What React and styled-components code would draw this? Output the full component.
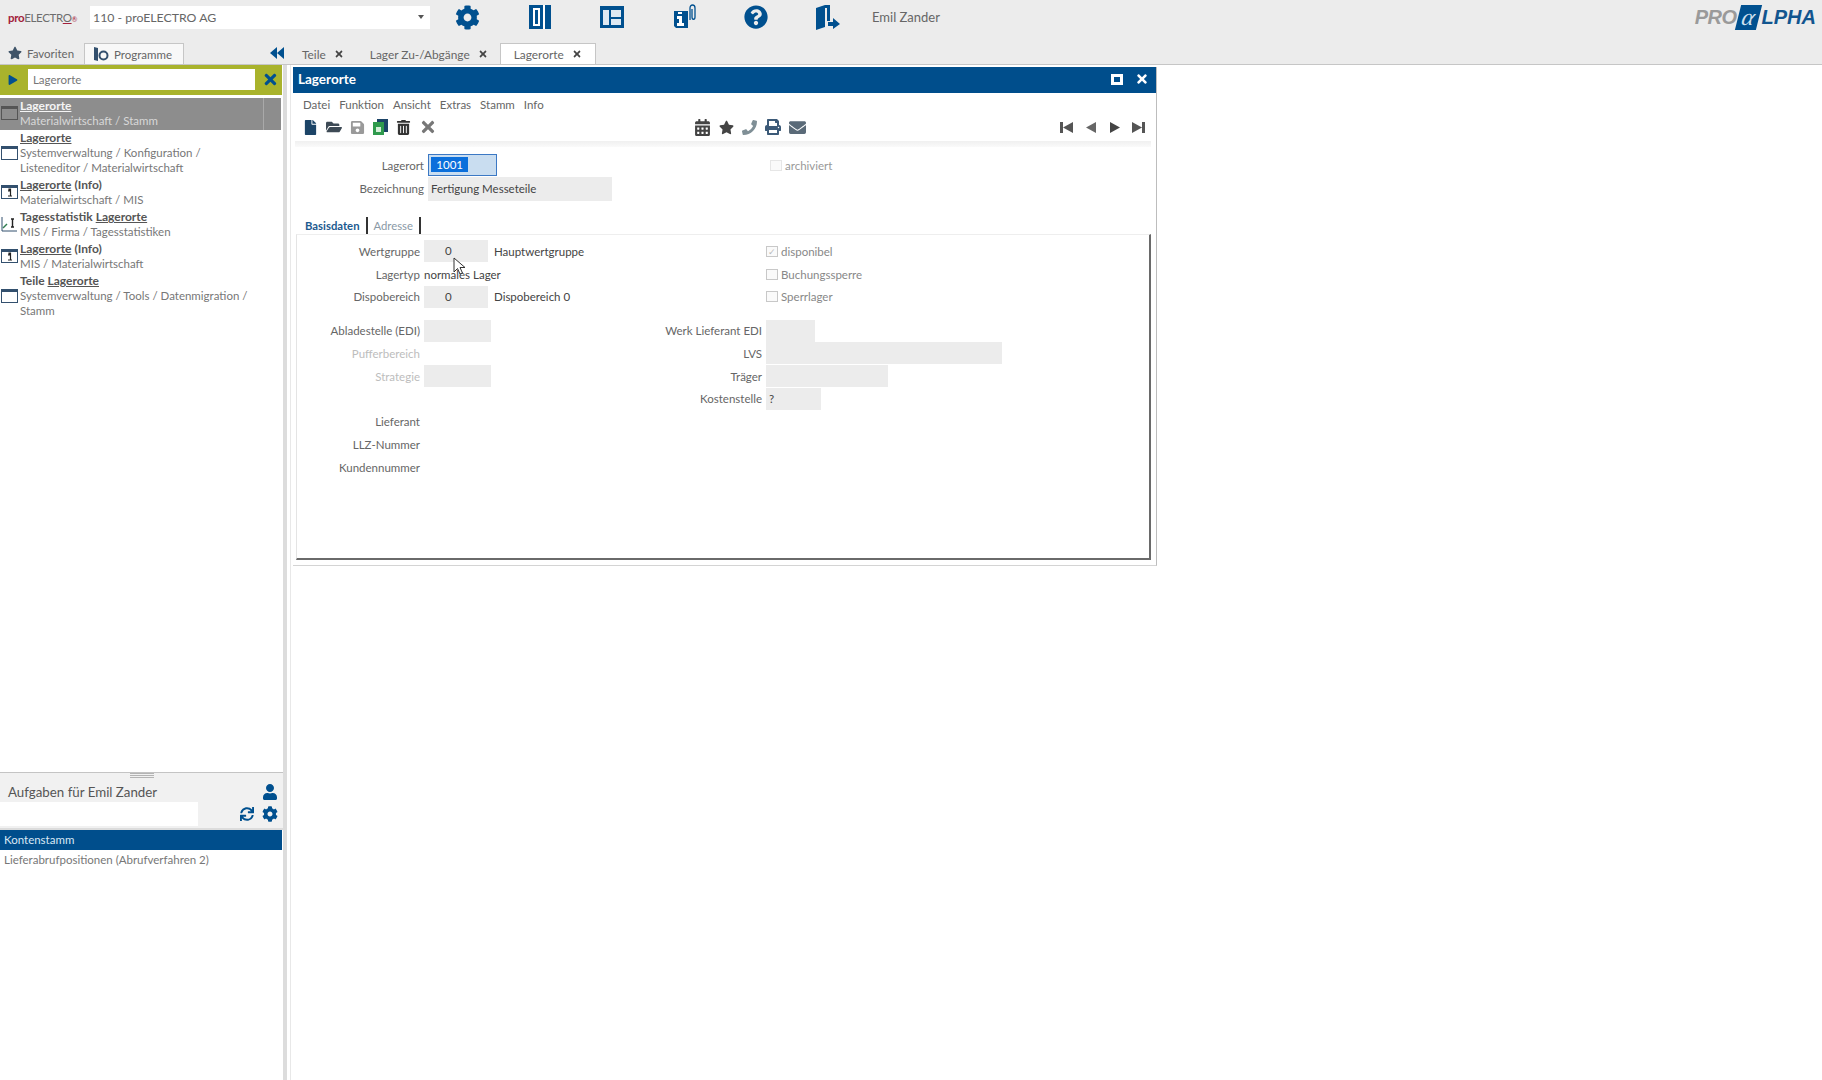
import React from 'react';
import styled, { createGlobalStyle } from 'styled-components';
import {
	FaCog,
	FaStar,
	FaUser,
	FaSync,
	FaTimes,
	FaCalendarAlt,
	FaPhoneAlt,
	FaPrint,
	FaEnvelope,
	FaFile,
	FaFolderOpen,
	FaSave,
	FaTrashAlt,
	FaQuestionCircle,
	FaPlay,
} from 'react-icons/fa';

const results = [
	{ title: ['Lagerorte'], rest: '', path: ['Materialwirtschaft / Stamm'], icon: 'window', selected: true },
	{ title: ['Lagerorte'], rest: '', path: ['Systemverwaltung / Konfiguration /', 'Listeneditor / Materialwirtschaft'], icon: 'window' },
	{ title: ['Lagerorte'], rest: ' (Info)', path: ['Materialwirtschaft / MIS'], icon: 'info' },
	{ before: 'Tagesstatistik ', title: ['Lagerorte'], rest: '', path: ['MIS / Firma / Tagesstatistiken'], icon: 'chart' },
	{ title: ['Lagerorte'], rest: ' (Info)', path: ['MIS / Materialwirtschaft'], icon: 'info' },
	{ before: 'Teile ', title: ['Lagerorte'], rest: '', path: ['Systemverwaltung / Tools / Datenmigration /', 'Stamm'], icon: 'window' },
];

const menus = ['Datei', 'Funktion', 'Ansicht', 'Extras', 'Stamm', 'Info'];

const ListIcon = ({ kind, selected }) => {
	const stroke = selected ? '#555' : '#33506e';
	if (kind === 'chart') {
		return (
			<svg width='17' height='16' viewBox='0 0 17 16'>
				<path d='M1 1v14h15' fill='none' stroke={stroke} strokeWidth='1' />
				<path d='M2 12l4-4' fill='none' stroke='#2f7d4f' strokeWidth='1.4' />
				<path d='M10 3h3M11.5 3v8M10 11h3' fill='none' stroke='#222' strokeWidth='1.4' />
			</svg>
		);
	}
	return (
		<svg width='17' height='16' viewBox='0 0 17 16'>
			<rect x='0.5' y='1.5' width='16' height='13' fill={selected ? '#8d8d8d' : '#fff'} stroke={stroke} />
			<rect x='0.5' y='1.5' width='16' height='2.5' fill={stroke} />
			{kind === 'info' && <path d='M7 7h2.5v5H11M7 12h4M8 5h1.5v1H8z' fill='none' stroke='#222' strokeWidth='1.2' />}
		</svg>
	);
};

const NavIcon = ({ d, color }) => (
	<svg width='15' height='15' viewBox='0 0 15 15'>
		<path d={d} fill={color} />
	</svg>
);

const App = () => {
	return (
		<>
			<GlobalStyle />
			<Page>
				<TopBar>
					<BrandRow>
						<ProElectro>
							<b>pro</b>ELECTR<u>O</u>
							<i>®</i>
						</ProElectro>
						<ClientSelect>
							<span>110 - proELECTRO AG</span>
							<Caret />
						</ClientSelect>
						<TopIcons>
							<FaCog size={25} />
							<svg width='24' height='24' viewBox='0 0 24 24'>
								<rect x='1' y='0' width='22' height='24' fill='#00508f' />
								<rect x='5' y='3' width='7' height='18' fill='#fff' />
								<rect x='7' y='5' width='3' height='14' fill='#00508f' />
								<rect x='15' y='0' width='2' height='24' fill='#fff' />
							</svg>
							<svg width='24' height='24' viewBox='0 0 24 24'>
								<rect x='0' y='1' width='24' height='22' fill='#00508f' />
								<rect x='3' y='5' width='6' height='15' fill='#dfe9f2' />
								<rect x='11' y='5' width='10' height='7' fill='#dfe9f2' />
								<rect x='11' y='14' width='10' height='6' fill='#dfe9f2' />
							</svg>
							<svg width='24' height='26' viewBox='0 0 24 26'>
								<path d='M2 7h14v17H4l-2-2z' fill='#00508f' />
								<path d='M6 8h4v2H6zM5 12h5v7h2v3H5v-3h2v-4H5z' fill='#fff' />
								<path d='M18 16V4c0-4 5-4 5 0v9c0 3-3 3-3 0V5' fill='none' stroke='#00508f' strokeWidth='1.3' />
							</svg>
							<FaQuestionCircle size={24} />
							<svg width='24' height='25' viewBox='0 0 24 25'>
								<path d='M0 3l9-3h5v16h-3V3H9v19l-9 3z' fill='#00508f' />
								<path d='M12 17h5v-4l7 6-7 5v-3h-5z' fill='#00508f' />
							</svg>
						</TopIcons>
						<UserName>Emil Zander</UserName>
						<ProAlpha>
							<span>PRO</span>
							<AlphaBlock>
								<em>α</em>
							</AlphaBlock>
							<strong>LPHA</strong>
						</ProAlpha>
					</BrandRow>
					<NavRow>
						<NavLeft>
							<FavTab>
								<FaStar size={14} />
								Favoriten
							</FavTab>
							<ProgTab>
								<svg width='16' height='16' viewBox='0 0 16 16'>
									<path d='M1 1l4 1v13l-4-1z' fill='#33506e' />
									<circle cx='10.5' cy='9.5' r='4' fill='none' stroke='#33506e' strokeWidth='2' />
								</svg>
								Programme
							</ProgTab>
							<Collapse>
								<svg width='14' height='12' viewBox='0 0 14 12'>
									<path d='M7 0v12L0 6zM14 0v12L7 6z' fill='#00508f' />
								</svg>
							</Collapse>
						</NavLeft>
						<OpenTab $left={4}>
							Teile
							<FaTimes size={10} />
						</OpenTab>
						<OpenTab $left={-2}>
							Lager Zu-/Abgänge
							<FaTimes size={10} />
						</OpenTab>
						<OpenTab $active $left={-2}>
							Lagerorte
							<FaTimes size={10} />
						</OpenTab>
					</NavRow>
				</TopBar>
				<Body>
					<Sidebar>
						<SearchBar>
							<FaPlay size={10} />
							<SearchInput>Lagerorte</SearchInput>
							<FaTimes size={17} />
						</SearchBar>
						<ResultList>
							{results.map((r, i) => (
								<ResultRow key={i} $selected={r.selected}>
									<ListIcon kind={r.icon} selected={r.selected} />
									<ResultText>
										<ResultTitle $selected={r.selected}>
											{r.before}
											<u>{r.title[0]}</u>
											{r.rest}
										</ResultTitle>
										{r.path.map((p) => (
											<ResultPath key={p} $selected={r.selected}>
												{p}
											</ResultPath>
										))}
									</ResultText>
								</ResultRow>
							))}
						</ResultList>
						<TaskPanel>
							<Grip />
							<TaskHead>
								<TaskTitle>Aufgaben für Emil Zander</TaskTitle>
								<FaUser size={16} />
							</TaskHead>
							<TaskTools>
								<TaskFilter />
								<FaSync size={14} />
								<FaCog size={16} />
							</TaskTools>
						</TaskPanel>
						<TaskList>
							<TaskRow $active>Kontenstamm</TaskRow>
							<TaskRow>Lieferabrufpositionen (Abrufverfahren 2)</TaskRow>
						</TaskList>
					</Sidebar>
					<Splitter />
					<Main>
						<Window>
							<TitleBar>
								Lagerorte
								<WindowButtons>
									<Maximize />
									<FaTimes size={14} />
								</WindowButtons>
							</TitleBar>
							<MenuBar>
								{menus.map((m) => (
									<span key={m}>{m}</span>
								))}
							</MenuBar>
							<Toolbar>
								<ToolGroup>
									<FaFile size={15} color='#1c4467' />
									<FaFolderOpen size={16} color='#3d4a55' />
									<FaSave size={15} color='#9a9a9a' />
									<svg width='15' height='16' viewBox='0 0 15 16'>
										<rect x='4' y='0' width='11' height='13' fill='#1c4467' />
										<rect x='0' y='3' width='11' height='13' fill='#2f9a4d' />
										<rect x='3' y='8' width='5' height='5' fill='#d5efd9' />
									</svg>
									<FaTrashAlt size={15} color='#333' />
									<FaTimes size={18} color='#777' />
								</ToolGroup>
								<ToolGroup $gap={8} $left={257}>
									<FaCalendarAlt size={17} color='#444' />
									<FaStar size={15} color='#444' />
									<FaPhoneAlt size={15} color='#7f8f96' style={{ transform: 'scaleX(-1)' }} />
									<FaPrint size={16} color='#3c5a78' />
									<FaEnvelope size={17} color='#5a6a78' />
								</ToolGroup>
								<ToolGroup $gap={9} $push>
									<NavIcon d='M1 2h3v11H1zM14 2v11L4 7.5z' color='#555' />
									<NavIcon d='M13 2v11L3 7.5z' color='#666' />
									<NavIcon d='M3 2v11l10-5.5z' color='#444' />
									<NavIcon d='M1 2v11l10-5.5zM11 2h3v11h-3z' color='#555' />
								</ToolGroup>
							</Toolbar>
							<ToolShade />
							<HeadForm>
								<HeadRow>
									<HeadCell>
										<Label $width={131}>Lagerort</Label>
										<KeyInput>
											<mark>1001</mark>
										</KeyInput>
									</HeadCell>
									<CheckCell $left={4}>
										<Check $faint />
										<CheckLabel $faint>archiviert</CheckLabel>
									</CheckCell>
								</HeadRow>
								<HeadRow>
									<HeadCell>
										<Label $width={131}>Bezeichnung</Label>
										<Field $width={184} $height={24}>
											Fertigung Messeteile
										</Field>
									</HeadCell>
								</HeadRow>
							</HeadForm>
							<FormTabs>
								<FormTab $active>Basisdaten</FormTab>
								<FormTab>Adresse</FormTab>
							</FormTabs>
							<TabFrame>
								<FieldGrid>
									<Label>Wertgruppe</Label>
									<ValueCell>
										<Field $width={64} $pad={21} $hasCursor>
											0
											<Cursor width='13' height='18' viewBox='0 0 13 18'>
												<path d='M1 1v14l3.5-3.5 2.5 5.5 2.5-1-2.5-5.5h5z' fill='#fff' stroke='#333' />
											</Cursor>
										</Field>
										<Value>Hauptwertgruppe</Value>
									</ValueCell>
									<span />
									<CheckCell>
										<Check $checked />
										<CheckLabel>disponibel</CheckLabel>
									</CheckCell>

									<Label>Lagertyp</Label>
									<ValueCell>
										<Value>normales Lager</Value>
									</ValueCell>
									<span />
									<CheckCell>
										<Check />
										<CheckLabel>Buchungssperre</CheckLabel>
									</CheckCell>

									<Label>Dispobereich</Label>
									<ValueCell>
										<Field $width={64} $pad={21}>
											0
										</Field>
										<Value>Dispobereich 0</Value>
									</ValueCell>
									<span />
									<CheckCell>
										<Check />
										<CheckLabel>Sperrlager</CheckLabel>
									</CheckCell>
								</FieldGrid>
								<FieldGrid $top={11}>
									<Label>Abladestelle (EDI)</Label>
									<ValueCell>
										<Field $width={67} />
									</ValueCell>
									<Label>Werk Lieferant EDI</Label>
									<ValueCell>
										<Field $width={49} />
									</ValueCell>

									<Label $disabled>Pufferbereich</Label>
									<span />
									<Label>LVS</Label>
									<ValueCell>
										<Field $width={236} />
									</ValueCell>

									<Label $disabled>Strategie</Label>
									<ValueCell>
										<Field $width={67} />
									</ValueCell>
									<Label>Träger</Label>
									<ValueCell>
										<Field $width={122} />
									</ValueCell>

									<span />
									<span />
									<Label>Kostenstelle</Label>
									<ValueCell>
										<Field $width={55} $pad={3}>
											?
										</Field>
									</ValueCell>

									<Label>Lieferant</Label>
									<span />
									<span />
									<span />

									<Label>LLZ-Nummer</Label>
									<span />
									<span />
									<span />

									<Label>Kundennummer</Label>
									<span />
									<span />
									<span />
								</FieldGrid>
							</TabFrame>
						</Window>
					</Main>
				</Body>
			</Page>
		</>
	);
};

export default App;

const GlobalStyle = createGlobalStyle`
	html, body {
		margin: 0;
		background: #fff;
	}

	body {
		font-family: 'Lato', 'Open Sans', sans-serif;
		font-size: 11.5px;
		color: #555;
	}
`;

const Page = styled.div`
	width: 1822px;
	height: 1080px;
	display: flex;
	flex-direction: column;
	overflow: hidden;
`;

const TopBar = styled.header`
	height: 65px;
	flex: none;
	box-sizing: border-box;
	background: #ececec;
	border-bottom: 1px solid #c6c6c6;
	display: flex;
	flex-direction: column;
`;

const BrandRow = styled.div`
	height: 42px;
	padding: 0 6px 8px 8px;
	box-sizing: border-box;
	display: flex;
	align-items: center;
`;

const ProElectro = styled.div`
	width: 82px;
	font-size: 11.5px;
	letter-spacing: -0.35px;
	color: #6d6d6d;
	white-space: nowrap;

	b {
		color: #a3203a;
	}

	u {
		text-decoration-color: #a3203a;
	}

	i {
		font-size: 7px;
		color: #a3203a;
	}
`;

const ClientSelect = styled.div`
	width: 340px;
	height: 23px;
	box-sizing: border-box;
	padding: 0 6px 0 3px;
	background: #fff;
	font-size: 12.3px;
	color: #666;
	display: flex;
	align-items: center;
	justify-content: space-between;
`;

const Caret = styled.i`
	width: 0;
	height: 0;
	border-left: 3px solid transparent;
	border-right: 3px solid transparent;
	border-top: 4px solid #555;
`;

const TopIcons = styled.div`
	margin-left: 25px;
	display: flex;
	align-items: center;
	gap: 48px;
	color: #00508f;
`;

const UserName = styled.div`
	margin-left: 32px;
	font-size: 13px;
	color: #666;
`;

const ProAlpha = styled.div`
	margin-left: auto;
	display: flex;
	align-items: center;
	font-family: 'Liberation Sans', sans-serif;
	font-style: italic;
	font-weight: 700;
	font-size: 20px;

	span {
		color: #9a9a9a;
		letter-spacing: -0.5px;
	}

	strong {
		color: #12558f;
	}
`;

const AlphaBlock = styled.div`
	width: 21px;
	height: 25px;
	margin: 0 3px 0 1px;
	background: #00508f;
	transform: skewX(-14deg);
	display: flex;
	align-items: center;
	justify-content: center;

	em {
		color: #cfe0ee;
		font-size: 24px;
		font-weight: 400;
		font-family: 'Liberation Serif', serif;
	}
`;

const NavRow = styled.div`
	flex: 1;
	display: flex;
	align-items: stretch;
`;

const NavLeft = styled.div`
	width: 284px;
	flex: none;
	display: flex;
	align-items: stretch;
`;

const FavTab = styled.div`
	width: 84px;
	box-sizing: border-box;
	padding-left: 8px;
	display: flex;
	align-items: center;
	gap: 5px;
	color: #666;

	svg {
		color: #3f5469;
	}
`;

const ProgTab = styled.div`
	width: 100px;
	box-sizing: border-box;
	padding-left: 8px;
	margin-top: 1px;
	background: #f8f8f8;
	border: 1px solid #c6c6c6;
	border-bottom: 0;
	display: flex;
	align-items: center;
	gap: 5px;
	color: #666;
`;

const Collapse = styled.div`
	margin-left: auto;
	display: flex;
	align-items: center;
`;

const OpenTab = styled.div`
	margin-left: ${(p) => p.$left}px;
	padding: 0 13px;
	margin-top: 1px;
	display: flex;
	align-items: center;
	gap: 8px;
	font-size: 11.9px;
	color: #666;
	background: ${(p) => (p.$active ? '#fff' : 'transparent')};
	border: 1px solid ${(p) => (p.$active ? '#c6c6c6' : 'transparent')};
	border-bottom: 0;

	svg {
		color: #444;
	}
`;

const Body = styled.div`
	flex: 1;
	display: flex;
	min-height: 0;
`;

const Sidebar = styled.aside`
	width: 283px;
	flex: none;
	display: flex;
	flex-direction: column;
`;

const SearchBar = styled.div`
	height: 30px;
	flex: none;
	box-sizing: border-box;
	padding: 0 3px 1px 8px;
	margin-right: 1px;
	background: #a9b32c;
	display: flex;
	align-items: center;
	color: #00508f;
`;

const SearchInput = styled.div`
	width: 229px;
	height: 21px;
	margin: 0 7px 0 10px;
	padding-left: 5px;
	box-sizing: border-box;
	background: #fff;
	color: #777;
	line-height: 21px;
`;

const ResultList = styled.div`
	flex: 1;
	padding-top: 3px;
`;

const ResultRow = styled.div`
	display: flex;
	align-items: center;
	margin-right: 2px;
	padding: 0 0 1.4px 1px;
	gap: 2px;
	min-height: 32px;
	box-sizing: border-box;
	background: ${(p) =>
		p.$selected
			? 'linear-gradient(90deg, transparent 263px, #a9a9a9 263px, #a9a9a9 264px, transparent 264px), #8d8d8d'
			: 'transparent'};
`;

const ResultText = styled.div`
	line-height: 15.2px;
`;

const ResultTitle = styled.div`
	font-size: 12px;
	font-weight: 700;
	color: ${(p) => (p.$selected ? '#f4f4f4' : '#555')};
`;

const ResultPath = styled.div`
	color: ${(p) => (p.$selected ? '#d8d8d8' : '#777')};
`;

const TaskPanel = styled.div`
	height: 58px;
	flex: none;
	box-sizing: border-box;
	background: #f1f1f1;
	border-top: 1px solid #c4c4c4;
	border-bottom: 2px solid #dcdcdc;
`;

const Grip = styled.div`
	width: 24px;
	height: 5px;
	margin: 0 auto;
	background: repeating-linear-gradient(180deg, #b4b4b4 0 1px, transparent 1px 2px);
`;

const TaskHead = styled.div`
	height: 24px;
	padding: 4px 5px 0 8px;
	box-sizing: border-box;
	display: flex;
	align-items: center;
	justify-content: space-between;
	color: #00508f;
`;

const TaskTitle = styled.div`
	font-size: 13.3px;
	color: #555;
`;

const TaskTools = styled.div`
	height: 24px;
	padding-right: 5px;
	display: flex;
	align-items: center;
	gap: 8px;
	color: #00508f;
`;

const TaskFilter = styled.div`
	width: 198px;
	height: 24px;
	margin-right: auto;
	background: #fff;
`;

const TaskList = styled.div`
	height: 250px;
	flex: none;
`;

const TaskRow = styled.div`
	height: 20px;
	padding-left: 4px;
	margin-right: 1px;
	line-height: 19px;
	background: ${(p) => (p.$active ? '#004e8c' : 'transparent')};
	color: ${(p) => (p.$active ? '#d9e8f4' : '#777')};
`;

const Splitter = styled.div`
	width: 4px;
	flex: none;
	background: #dcdcdc;
`;

const Main = styled.main`
	flex: 1;
	margin-left: 3px;
	padding: 2px 0 0 2px;
	border-left: 1px solid #e8e8e8;
`;

const Window = styled.section`
	width: 864px;
	height: 499px;
	box-sizing: border-box;
	border-right: 1px solid #bdbdbd;
	border-bottom: 1px solid #d4d4d4;
	display: flex;
	flex-direction: column;
`;

const TitleBar = styled.div`
	height: 26px;
	flex: none;
	padding: 0 7px 2px 5px;
	box-sizing: border-box;
	background: #004e8c;
	color: #fff;
	font-size: 13.5px;
	font-weight: 700;
	display: flex;
	align-items: center;
	justify-content: space-between;
`;

const WindowButtons = styled.div`
	display: flex;
	align-items: center;
	gap: 12px;
`;

const Maximize = styled.i`
	width: 12px;
	height: 11px;
	box-sizing: border-box;
	border: 3px solid #fff;
`;

const MenuBar = styled.nav`
	height: 22px;
	flex: none;
	padding-left: 10px;
	display: flex;
	align-items: center;
	gap: 9px;
	color: #666;
`;

const Toolbar = styled.div`
	height: 26px;
	flex: none;
	padding: 0 10px 2px 10px;
	box-sizing: border-box;
	display: flex;
	align-items: center;
`;

const ToolGroup = styled.div`
	display: flex;
	align-items: center;
	gap: ${(p) => p.$gap || 8}px;
	margin-left: ${(p) => (p.$push ? 'auto' : `${p.$left || 0}px`)};
`;

const ToolShade = styled.div`
	height: 6px;
	flex: none;
	margin: 0 5px 0 2px;
	background: linear-gradient(180deg, #f0f0f0, #fafafa);
`;

const HeadForm = styled.div`
	padding-top: 7px;
	flex: none;
`;

const HeadRow = styled.div`
	height: 22.5px;
	display: grid;
	grid-template-columns: 473px 1fr;
	align-items: center;
`;

const HeadCell = styled.div`
	display: flex;
	align-items: center;
	gap: 4px;
`;

const Label = styled.div`
	width: ${(p) => (p.$width ? `${p.$width}px` : 'auto')};
	flex: none;
	text-align: right;
	white-space: nowrap;
	color: ${(p) => (p.$disabled ? '#bdbdbd' : '#666')};
`;

const KeyInput = styled.div`
	width: 69px;
	height: 22px;
	box-sizing: border-box;
	padding: 2px 0 0 2px;
	background: #c9ddf0;
	border: 1px solid #3b78c4;
	line-height: 15px;

	mark {
		display: inline-block;
		width: 37px;
		text-align: right;
		padding-right: 5px;
		box-sizing: border-box;
		background: #0b6fdb;
		color: #fff;
	}
`;

const Field = styled.div`
	position: ${(p) => (p.$hasCursor ? 'relative' : 'static')};
	width: ${(p) => p.$width}px;
	height: ${(p) => p.$height || 22}px;
	flex: none;
	box-sizing: border-box;
	padding-left: ${(p) => p.$pad || 3}px;
	background: #ececec;
	color: #444;
	line-height: ${(p) => p.$height || 22}px;
`;

const Cursor = styled.svg`
	position: absolute;
	left: 29px;
	top: 17px;
	z-index: 2;
`;

const FormTabs = styled.div`
	height: 35px;
	flex: none;
	box-sizing: border-box;
	padding: 18px 0 0 12px;
	display: flex;
	gap: 6px;
`;

const FormTab = styled.div`
	height: 17px;
	line-height: 17px;
	padding-right: 6px;
	font-size: 11.3px;
	border-right: 2px solid #333;
	color: ${(p) => (p.$active ? '#1c5a8f' : '#8a99a6')};
	font-weight: ${(p) => (p.$active ? 700 : 400)};
`;

const TabFrame = styled.div`
	height: 326px;
	flex: none;
	box-sizing: border-box;
	margin: 0 5px 0 3px;
	padding-top: 5px;
	border-top: 1px solid #eee;
	border-right: 2px solid #6a6a6a;
	border-bottom: 2px solid #6a6a6a;
	border-left: 1px solid #e4e4e4;
`;

const FieldGrid = styled.div`
	display: grid;
	grid-template-columns: 123px 180px 154px 1fr;
	grid-auto-rows: 22.75px;
	column-gap: 4px;
	align-items: center;
	margin-top: ${(p) => p.$top || 0}px;
`;

const ValueCell = styled.div`
	display: flex;
	align-items: center;
	gap: 6px;
`;

const Value = styled.div`
	color: #444;
	white-space: nowrap;
`;

const CheckCell = styled.div`
	display: flex;
	align-items: center;
	gap: 3px;
	margin-left: ${(p) => p.$left || 0}px;
`;

const Check = styled.i`
	width: 12px;
	height: 11px;
	box-sizing: border-box;
	border: 1px solid ${(p) => (p.$faint ? '#e6e6e6' : '#c8c8c8')};
	background: #fafafa;
	display: flex;
	align-items: center;
	justify-content: center;
	font-style: normal;
	font-size: 9px;
	color: #bbb;

	&::before {
		content: '${(p) => (p.$checked ? '✓' : '')}';
	}
`;

const CheckLabel = styled.span`
	color: ${(p) => (p.$faint ? '#999' : '#888')};
`;
